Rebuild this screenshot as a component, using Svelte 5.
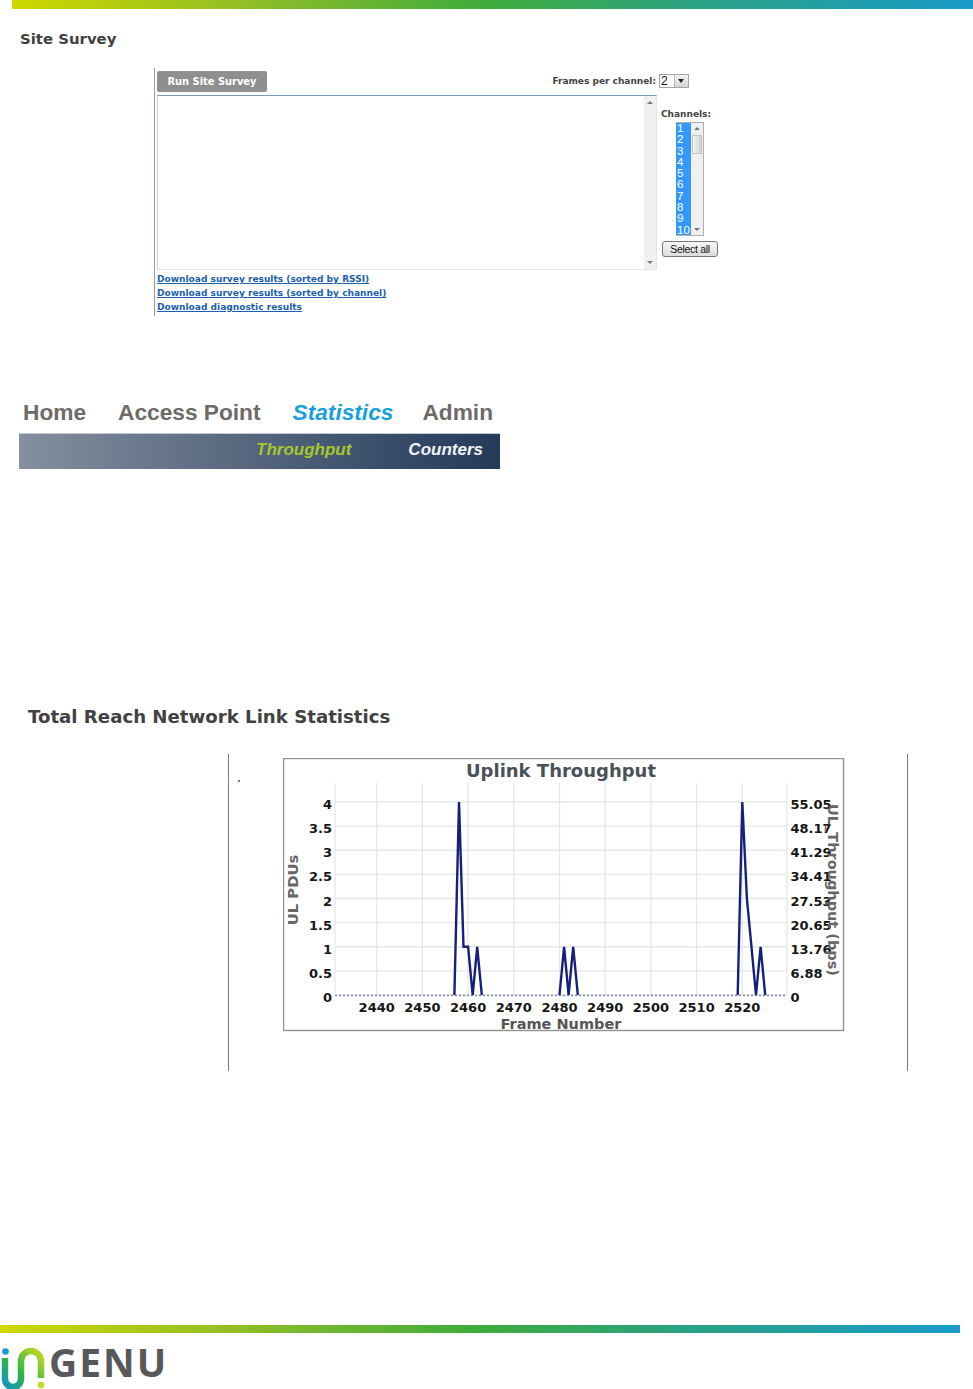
<script>
  const channels = [1, 2, 3, 4, 5, 6, 7, 8, 9, 10];
  const links = [
    'Download survey results (sorted by RSSI)',
    'Download survey results (sorted by channel)',
    'Download diagnostic results'
  ];
  const leftTicks = ['0', '0.5', '1', '1.5', '2', '2.5', '3', '3.5', '4'];
  const rightTicks = ['0', '6.88', '13.76', '20.65', '27.53', '34.41', '41.29', '48.17', '55.05'];
  const frames = [2440, 2450, 2460, 2470, 2480, 2490, 2500, 2510, 2520];

  const fx = (f) => 376.7 + (f - 2440) * 4.57;
  const vy = (v) => 995 - v * 48.25;

  // the bursts, as [frame, pdus]. between them the trace sits on the dotted zero line
  const bursts = [
    [[2457, 0], [2458, 4], [2459, 1], [2460, 1], [2461, 0], [2462, 1], [2463, 0]],
    [[2480, 0], [2481, 1], [2482, 0], [2483, 1], [2484, 0]],
    [[2519, 0], [2520, 4], [2521, 2], [2523, 0], [2524, 1], [2525, 0]]
  ];
  const lines = bursts.map((b) => b.map(([f, v]) => fx(f).toFixed(1) + ',' + vy(v).toFixed(1)).join(' '));
</script>

<div class="page">
  <div class="bar top"></div>

  <h2 class="survey-title">Site Survey</h2>

  <section class="survey">
    <div class="survey-head">
      <button class="run">Run Site Survey</button>
      <div class="frames">
        <span>Frames per channel:</span>
        <div class="combo"><span class="val">2</span><span class="arrow"></span></div>
      </div>
    </div>
    <div class="survey-body">
      <div class="results">
        <div class="vscroll">
          <span class="up"></span>
          <span class="down"></span>
        </div>
      </div>
      <div class="chan">
        <div class="chan-label">Channels:</div>
        <div class="listbox">
          <div class="opts">
            {#each channels as c}
              <div>{c}</div>
            {/each}
          </div>
          <div class="lscroll">
            <span class="up"></span>
            <span class="thumb"></span>
            <span class="down"></span>
          </div>
        </div>
        <button class="selall">Select all</button>
      </div>
    </div>
    <div class="links">
      {#each links as l}
        <a href="#top">{l}</a>
      {/each}
    </div>
  </section>

  <nav class="menu">
    <span class="m1">Home</span>
    <span class="m2">Access Point</span>
    <span class="m3 on">Statistics</span>
    <span class="m4">Admin</span>
  </nav>
  <div class="submenu">
    <span class="s1">Throughput</span>
    <span class="s2">Counters</span>
  </div>

  <h2 class="stats-title">Total Reach Network Link Statistics</h2>

  <section class="frame">
    <span class="dot"></span>
    <svg class="chart" width="562" height="274" viewBox="283 758 562 274">
      <rect x="283.5" y="758.5" width="560" height="272" fill="#fff" stroke="#8f8f8f" stroke-width="1.4" />
      <text class="title" x="561" y="777" text-anchor="middle">Uplink Throughput</text>

      {#each leftTicks as t, i}
        <line class="grid" x1="335" x2="787" y1={vy(i * 0.5)} y2={vy(i * 0.5)} />
        <text class="tick" x="332" y={vy(i * 0.5) + 7} text-anchor="end">{t}</text>
      {/each}
      {#each rightTicks as t, i}
        <text class="tick" x="790.5" y={vy(i * 0.5) + 7}>{t}</text>
      {/each}
      <line class="grid" x1="335" x2="335" y1="783" y2="995" />
      <line class="grid" x1="787" x2="787" y1="783" y2="995" />
      {#each frames as f}
        <line class="grid" x1={fx(f)} x2={fx(f)} y1="783" y2="995" />
        <text class="tick" x={fx(f)} y="1012" text-anchor="middle">{f}</text>
      {/each}

      <line class="zero" x1="335" x2="787" y1="995.5" y2="995.5" />
      {#each lines as l}
        <polyline class="data" points={l} />
      {/each}

      <text class="axis" x="561" y="1029" text-anchor="middle">Frame Number</text>
      <text class="axis pdu" transform="translate(298 890) rotate(-90)" text-anchor="middle">UL PDUs</text>
      <text class="axis tput" transform="translate(828 890) rotate(90)" text-anchor="middle">UL_Throughput (bps)</text>
    </svg>
  </section>

  <footer class="foot">
    <div class="bar bottom"></div>
    <div class="logo">
      <svg width="48" height="44" viewBox="0 0 48 44">
        <defs>
          <linearGradient id="lg" x1="0" y1="1" x2="1" y2="0">
            <stop offset="0" stop-color="#1296c8" />
            <stop offset="0.4" stop-color="#2db34a" />
            <stop offset="1" stop-color="#c6d920" />
          </linearGradient>
        </defs>
        <circle cx="5.5" cy="3.5" r="3.3" fill="#159bd0" />
        <path d="M5 10 V31 A8 8 0 0 0 21 31 V13 A10 10 0 0 1 41 13 V30" fill="none" stroke="url(#lg)" stroke-width="6.5" />
        <circle cx="41" cy="37" r="3.3" fill="#c6d920" />
      </svg>
      <span class="word">GENU</span>
    </div>
  </footer>
</div>

<style>
  :global(body) {
    margin: 0;
    background: #fff;
  }

  .page {
    width: 973px;
    height: 1389px;
    overflow: hidden;
    display: flex;
    flex-direction: column;
    font-family: "DejaVu Sans", sans-serif;
  }

  .bar {
    background: linear-gradient(90deg, #cfd800 0%, #8fbd27 25%, #3dab3d 50%, #2aa286 72%, #1a9bc9 100%);
  }
  .bar.top {
    height: 9px;
    margin-left: 12px;
  }
  .bar.bottom {
    height: 8px;
    width: 960px;
  }

  h2 {
    margin: 0;
    font-weight: 700;
    color: #414042;
  }
  .survey-title {
    font-size: 14.9px;
    line-height: 18px;
    margin: 21px 0 0 20px;
  }

  .survey {
    margin: 20px 0 0 154px;
    width: 570px;
    height: 248px;
    border-left: 1px solid #9a9a9a;
    box-sizing: border-box;
    padding: 3px 0 0 2px;
  }
  .survey-head {
    display: flex;
    justify-content: space-between;
    align-items: flex-start;
    width: 532px;
  }
  .run {
    width: 110px;
    height: 21px;
    padding: 0;
    border: 0;
    border-radius: 2px;
    background: #8f8f8f;
    color: #fff;
    font: 700 9.9px "DejaVu Sans", sans-serif;
  }
  .frames {
    display: flex;
    align-items: center;
    gap: 3px;
    margin-top: 3px;
    font-size: 9px;
    font-weight: 700;
    color: #444;
  }
  .combo {
    width: 30px;
    height: 14px;
    box-sizing: border-box;
    border: 1px solid #a5a5a5;
    display: flex;
    justify-content: space-between;
    background: #fff;
  }
  .val {
    font: 400 12px/12px "Liberation Sans", sans-serif;
    color: #111;
    padding-left: 1px;
  }
  .arrow {
    width: 13px;
    background: linear-gradient(#f4f4f4, #d4d4d4);
    border-left: 1px solid #b5b5b5;
    position: relative;
  }
  .arrow::after {
    content: "";
    position: absolute;
    left: 3px;
    top: 4px;
    border: 3.5px solid transparent;
    border-top: 4px solid #222;
    border-bottom: 0;
  }

  .survey-body {
    display: flex;
    margin-top: 3px;
  }
  .results {
    width: 500px;
    height: 175px;
    box-sizing: border-box;
    border: 1px solid #dfe6ea;
    border-top-color: #6f9cbf;
    border-left-color: #c9d6df;
    display: flex;
    justify-content: flex-end;
  }
  .vscroll {
    width: 12px;
    background: #f0f0f0;
    display: flex;
    flex-direction: column;
    justify-content: space-between;
    align-items: center;
    padding: 5px 0;
  }
  .up,
  .down {
    display: block;
    border: 3px solid transparent;
    border-bottom: 3px solid #777;
    border-top: 0;
  }
  .down {
    border-bottom: 0;
    border-top: 3px solid #777;
  }

  .chan {
    margin-left: 4px;
    width: 60px;
    font-size: 9px;
  }
  .chan-label {
    margin-top: 14px;
    font-weight: 700;
    color: #444;
    line-height: 10px;
  }
  .listbox {
    margin: 3px 0 0 15px;
    width: 28px;
    height: 114px;
    display: flex;
    box-sizing: border-box;
    border: 1px solid #b0b0b0;
    border-left: 0;
  }
  .opts {
    width: 15px;
    height: 112px;
    background: #3399ff;
    color: #fff;
    font: 400 11.5px/11.3px "Liberation Sans", sans-serif;
    padding-left: 1px;
    box-sizing: border-box;
  }
  .lscroll {
    flex: 1;
    background: #f0f0f0;
    display: flex;
    flex-direction: column;
    align-items: center;
    padding-top: 4px;
    position: relative;
  }
  .lscroll .down {
    position: absolute;
    bottom: 4px;
  }
  .thumb {
    width: 10px;
    height: 19px;
    margin-top: 5px;
    background: linear-gradient(90deg, #f5f5f5, #d0d0d0);
    border: 1px solid #c4c4c4;
    box-sizing: border-box;
  }
  .selall {
    margin: 5px 0 0 1px;
    width: 56px;
    height: 16px;
    padding: 0;
    border: 1px solid #777;
    border-radius: 3px;
    background: linear-gradient(#f7f7f7, #dcdcdc);
    color: #111;
    font: 400 10.5px "Liberation Sans", sans-serif;
    letter-spacing: -0.3px;
  }

  .links {
    display: flex;
    flex-direction: column;
    font-size: 9.05px;
    font-weight: 700;
    line-height: 13.9px;
    margin-top: 3px;
  }
  .links a {
    color: #1b5fae;
    align-self: flex-start;
  }

  .menu {
    margin: 81px 0 0 0;
    height: 30px;
    display: flex;
    align-items: center;
    font: 700 22.7px "Liberation Sans", sans-serif;
    color: #6e6a67;
  }
  .m1 {
    margin-left: 23px;
  }
  .m2 {
    margin-left: 32px;
  }
  .m3 {
    margin-left: 32px;
  }
  .m4 {
    margin-left: 29px;
  }
  .on {
    color: #1b9fdc;
    font-style: italic;
  }

  .submenu {
    margin: 6px 0 0 19px;
    width: 481px;
    height: 36px;
    box-sizing: border-box;
    border-top: 1px solid #c4cad2;
    padding-bottom: 4px;
    background: linear-gradient(90deg, #848f9f, #233a5a);
    display: flex;
    align-items: center;
    font: italic 700 17px "Liberation Sans", sans-serif;
  }
  .s1 {
    margin-left: 237px;
    color: #a8c62c;
  }
  .s2 {
    margin-left: 57px;
    color: #f4f4f6;
  }

  .stats-title {
    margin: 237px 0 0 28px;
    font-size: 18.15px;
    line-height: 22px;
  }

  .frame {
    position: relative;
    margin: 26px 0 0 228px;
    width: 680px;
    height: 317px;
    box-sizing: border-box;
    border-left: 1px solid #777;
    border-right: 1px solid #777;
    padding: 4px 0 0 54px;
  }
  .dot {
    position: absolute;
    left: 9px;
    top: 26px;
    width: 2px;
    height: 2px;
    border-radius: 50%;
    background: #3a3ae0;
  }
  .chart {
    display: block;
  }
  .title {
    font: 700 18px "DejaVu Sans", sans-serif;
    fill: #4a5058;
  }
  .tick {
    font: 700 13px "DejaVu Sans", sans-serif;
    fill: #161616;
  }
  .axis {
    font: 700 14.5px "DejaVu Sans", sans-serif;
    fill: #555;
  }
  .pdu {
    font-size: 14.8px;
    fill: #666;
  }
  .tput {
    fill: #666;
  }
  .grid {
    stroke: #e6e6e6;
    stroke-width: 1.3;
  }
  .zero {
    stroke: #7f85b5;
    stroke-width: 1.4;
    stroke-dasharray: 2 2;
  }
  .data {
    fill: none;
    stroke: #14207c;
    stroke-width: 2.4;
    stroke-linejoin: miter;
  }

  .foot {
    margin-top: auto;
  }
  .logo {
    display: flex;
    align-items: flex-start;
    height: 56px;
    padding-top: 15px;
    box-sizing: border-box;
  }
  .logo svg {
    flex: none;
  }
  .word {
    margin: -2px 0 0 1px;
    font: 700 39px/32px "Open Sans", sans-serif;
    letter-spacing: 2px;
    color: #58585a;
  }
</style>
